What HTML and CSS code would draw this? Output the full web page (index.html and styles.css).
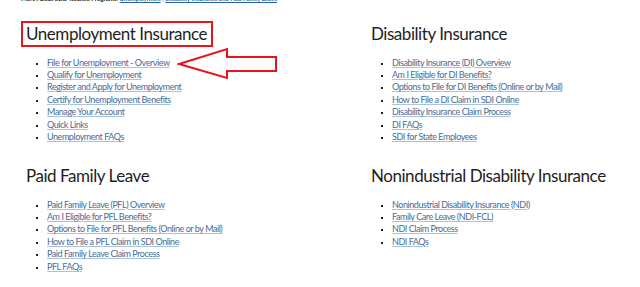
FILE: index.html
```html
<!DOCTYPE html>
<html>
<head>
    <title>EDD Programs</title>
    <link rel="stylesheet" href="styles.css">
</head>
<body>
    <!-- Breadcrumb line, cut off at the top of the shot -->
    <div class="related">
        More About EDD-Related Programs: <a href="#">Unemployment</a> <span class="sep">|</span> <a href="#">Disability Insurance and Paid Family Leave</a>
    </div>

    <div class="programs">
        <!-- Unemployment -->
        <section class="program top-row">
            <h2><span class="marked">Unemployment Insurance</span></h2>
            <ul>
                <li><a href="#">File for Unemployment - Overview</a></li>
                <li><a href="#">Qualify for Unemployment</a></li>
                <li><a href="#">Register and Apply for Unemployment</a></li>
                <li><a href="#">Certify for Unemployment Benefits</a></li>
                <li><a href="#">Manage Your Account</a></li>
                <li><a href="#">Quick Links</a></li>
                <li><a href="#">Unemployment FAQs</a></li>
            </ul>
        </section>

        <!-- Disability -->
        <section class="program top-row">
            <h2>Disability Insurance</h2>
            <ul>
                <li><a href="#">Disability Insurance (DI) Overview</a></li>
                <li><a href="#">Am I Eligible for DI Benefits?</a></li>
                <li><a href="#">Options to File for DI Benefits (Online or by Mail)</a></li>
                <li><a href="#">How to File a DI Claim in SDI Online</a></li>
                <li><a href="#">Disability Insurance Claim Process</a></li>
                <li><a href="#">DI FAQs</a></li>
                <li><a href="#">SDI for State Employees</a></li>
            </ul>
        </section>

        <!-- Paid Family Leave -->
        <section class="program">
            <h2>Paid Family Leave</h2>
            <ul>
                <li><a href="#">Paid Family Leave (PFL) Overview</a></li>
                <li><a href="#">Am I Eligible for PFL Benefits?</a></li>
                <li><a href="#">Options to File for PFL Benefits (Online or by Mail)</a></li>
                <li><a href="#">How to File a PFL Claim in SDI Online</a></li>
                <li><a href="#">Paid Family Leave Claim Process</a></li>
                <li><a href="#">PFL FAQs</a></li>
            </ul>
        </section>

        <!-- NDI -->
        <section class="program">
            <h2>Nonindustrial Disability Insurance</h2>
            <ul>
                <li><a href="#">Nonindustrial Disability Insurance (NDI)</a></li>
                <li><a href="#">Family Care Leave (NDI-FCL)</a></li>
                <li><a href="#">NDI Claim Process</a></li>
                <li><a href="#">NDI FAQs</a></li>
            </ul>
        </section>
    </div>

    <!-- Red annotation arrow -->
    <svg class="arrow" width="110" height="40" viewBox="0 0 110 40">
        <polygon points="2,17 50,2 50,10 99,10 99,24 50,24 50,31" fill="none" stroke="#e8141b" stroke-width="2"/>
    </svg>
</body>
</html>
```

FILE: styles.css
```css
/* Page basics */
body {
    margin: 0;
    font-family: Lato, "Liberation Sans", sans-serif;
    background: #fff;
    color: #222;
    position: relative;
}

/* Cut-off breadcrumb at the very top */
.related {
    margin-top: -5px;
    padding-left: 21px;
    font-size: 6px;
    font-weight: bold;
    line-height: 8px;
    color: #111;
    white-space: nowrap;
}

.related a {
    color: #1f63a9;
}

.related .sep {
    color: #c58a2e;
}

/* Two column grid of program blocks */
.programs {
    display: grid;
    grid-template-columns: 345px 1fr;
    padding-left: 26px;
    margin-top: 21px;
}

/* First row blocks share a fixed height so row two lines up */
.top-row {
    height: 142px;
}

h2 {
    font-weight: normal;
    font-size: 17px;
    line-height: 20px;
    letter-spacing: -0.45px;
    margin: 0 0 12.5px 0;
    color: #1e1e1e;
}

/* Red box drawn around the first heading */
.marked {
    display: inline-block;
    line-height: 20px;
    padding: 0 3px 0 2px;
    margin: 0 -3px 0 -2px;
    outline: 2px solid #e8141b;
    outline-offset: 1px;
}

ul {
    margin: 0;
    padding-left: 21px;
    list-style: square;
    font-size: 9px;
    line-height: 12.4px;
    letter-spacing: -0.45px;
}

li::marker {
    color: #222;
    font-size: 7px;
}

ul a {
    color: #4a6b94;
    text-decoration: underline;
    text-decoration-color: #a9c2de;
}

/* Annotation arrow over the list */
.arrow {
    position: absolute;
    left: 177px;
    top: 47px;
}
```
